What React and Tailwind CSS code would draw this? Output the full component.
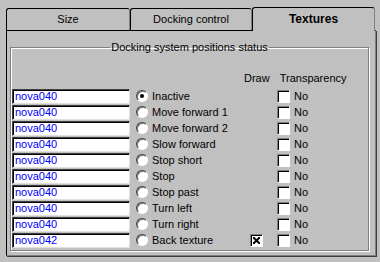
export default function App() {
  const rows = [
    { tex: "nova040", label: "Inactive", checked: true, draw: null },
    { tex: "nova040", label: "Move forward 1" },
    { tex: "nova040", label: "Move forward 2" },
    { tex: "nova040", label: "Slow forward" },
    { tex: "nova040", label: "Stop short" },
    { tex: "nova040", label: "Stop" },
    { tex: "nova040", label: "Stop past" },
    { tex: "nova040", label: "Turn left" },
    { tex: "nova040", label: "Turn right" },
    { tex: "nova042", label: "Back texture", draw: true },
  ];

  return (
    <div
      className="w-[380px] h-[262px] bg-[#c0c0c0] text-[11px] leading-[13px] text-black overflow-hidden"
      style={{ fontFamily: '"Liberation Sans", Arial, sans-serif' }}
    >
      {/* TABS */}
      <div className="flex items-end pl-[6px] pt-[6px] h-[30px]">
        <Tab width="w-[124px]" label="Size" />
        <Tab width="w-[122px]" label="Docking control" />
        <div className="w-[123px] h-[24px] relative z-10 -mb-[1px] bg-[#c0c0c0] border-t border-l border-r border-black border-r-[#808080] rounded-tl-[3px] rounded-tr-[3px] flex justify-center pt-[5px] font-bold text-[12px]">
          Textures
        </div>
      </div>

      {/* PANEL */}
      <div className="ml-[6px] w-[370px] h-[226px] border border-black border-r-[#808080] border-b-[#808080] shadow-[1px_1px_0_#404040] px-[3px] pt-[10px]">
        <fieldset className="w-[359px] h-[210px] border border-[#808080] shadow-[inset_1px_1px_0_#fff,1px_1px_0_#fff] px-[1px]">
          <legend className="mx-auto px-[1px]">Docking system positions status</legend>

          <div className="flex mt-[18px] h-[16px]">
            <span className="ml-[232px]">Draw</span>
            <span className="ml-[10px]">Transparency</span>
          </div>

          <div className="flex flex-col">
            {rows.map((r, i) => (
              <Row key={i} {...r} />
            ))}
          </div>
        </fieldset>
      </div>
    </div>
  );
}

/* ---------------- TAB ---------------- */

function Tab({ width, label }) {
  return (
    <div
      className={`${width} h-[22px] border-t border-l border-black border-r border-r-[#808080] rounded-tl-[3px] rounded-tr-[3px] flex justify-center pt-[4px]`}
    >
      {label}
    </div>
  );
}

/* ---------------- ROW ---------------- */

function Row({ tex, label, checked, draw }) {
  return (
    <div className="flex items-center h-[16px]">
      <div className="w-[118px] h-[15px] bg-white border-t border-l border-[#404040] border-b border-r border-b-[#dfdfdf] border-r-[#dfdfdf] shadow-[inset_1px_1px_0_#000] pl-[2px] text-[#0000ff] leading-[13px]">
        {tex}
      </div>

      <div className="ml-[6px] w-[12px] h-[12px] rounded-full bg-white border border-[#404040] border-b-[#fff] border-r-[#fff] shadow-[inset_1px_1px_0_#808080] flex items-center justify-center">
        {checked && <div className="w-[4px] h-[4px] rounded-full bg-black" />}
      </div>
      <span className="ml-[4px] w-[98px]">{label}</span>

      <div className="w-[13px] h-[13px] flex items-center justify-center">
        {draw && (
          <div className="w-[13px] h-[13px] bg-white border border-[#808080] border-b-white border-r-white shadow-[inset_1px_1px_0_#000] flex items-center justify-center">
            <svg width="7" height="7" viewBox="0 0 7 7">
              <path d="M0 0L7 7M7 0L0 7" stroke="#000" strokeWidth="2" />
            </svg>
          </div>
        )}
      </div>

      <div className="ml-[14px] w-[13px] h-[13px] bg-white border border-[#808080] border-b-white border-r-white shadow-[inset_1px_1px_0_#000]" />
      <span className="ml-[4px]">No</span>
    </div>
  );
}
